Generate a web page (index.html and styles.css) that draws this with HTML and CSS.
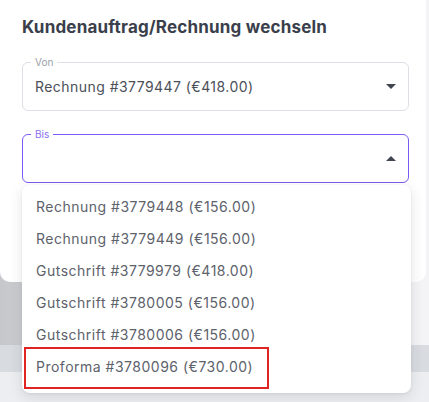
FILE: index.html
```html
<!DOCTYPE html>
<html lang="de">
<head>
<meta charset="utf-8">
<link rel="stylesheet" href="styles.css">
</head>
<body>
<div class="card">
  <h2 class="title">Kundenauftrag/Rechnung wechseln</h2>
  <div class="field">
    <span class="label">Von</span>
    <span class="value">Rechnung #3779447 (€418.00)</span>
    <span class="caret down"></span>
  </div>
  <div class="field focused">
    <span class="label">Bis</span>
    <span class="value"></span>
    <span class="caret up"></span>
  </div>
</div>
<ul class="menu">
  <li class="item">Rechnung #3779448 (€156.00)</li>
  <li class="item">Rechnung #3779449 (€156.00)</li>
  <li class="item">Gutschrift #3779979 (€418.00)</li>
  <li class="item">Gutschrift #3780005 (€156.00)</li>
  <li class="item">Gutschrift #3780006 (€156.00)</li>
  <li class="item marked">Proforma #3780096 (€730.00)</li>
</ul>
</body>
</html>
```
FILE: styles.css
```css
* { box-sizing: border-box; }
html, body { margin: 0; padding: 0; }
body {
  width: 429px;
  height: 402px;
  overflow: hidden;
  position: relative;
  font-family: "Inter", "Noto Sans", sans-serif;
  background:
    linear-gradient(to bottom, transparent 345px, #d8dbe0 345px, #d8dbe0 372px, #eceef1 372px),
    linear-gradient(to right, #c5c7cb 0%, #e4e5e8 30%, #f2f2f4 60%, #f4f4f6 100%);
}
.card {
  width: 426px;
  height: 282px;
  background: #fff;
  border-radius: 0 0 10px 10px;
  padding: 17px 17px 0 22px;
  display: flex;
  flex-direction: column;
}
.title {
  margin: 0 0 25px;
  font-size: 17px;
  font-weight: 700;
  color: #3a3f4b;
  line-height: 20px;
  letter-spacing: 0.2px;
}
.field {
  position: relative;
  height: 49px;
  border: 1px solid #dcdfe4;
  border-radius: 6px;
  display: flex;
  align-items: center;
  padding: 0 12px;
  margin-bottom: 23px;
}
.field.focused { border-color: #7b5cf0; }
.label {
  position: absolute;
  left: 8px;
  top: -7px;
  padding: 0 4px;
  background: #fff;
  font-size: 10px;
  line-height: 12px;
  color: #9ba0a7;
}
.focused .label { color: #8a6ff2; }
.value {
  flex: 1;
  font-size: 14px;
  letter-spacing: 0.45px;
  color: #4b5058;
}
.caret {
  width: 0;
  height: 0;
  border-left: 5px solid transparent;
  border-right: 5px solid transparent;
}
.caret.down { border-top: 5px solid #3f4652; }
.caret.up { border-bottom: 5px solid #3f4652; }
.menu {
  position: absolute;
  left: 22px;
  top: 185px;
  width: 389px;
  margin: 0;
  padding: 6px 0 10px;
  list-style: none;
  background: #fff;
  border-radius: 8px;
  box-shadow: 0 4px 14px rgba(40, 45, 60, 0.12), 0 1px 3px rgba(40, 45, 60, 0.08);
}
.item {
  position: relative;
  height: 32px;
  line-height: 32px;
  padding-left: 14px;
  font-size: 14px;
  letter-spacing: 0.5px;
  color: #5d626b;
}
.item.marked::after {
  content: "";
  position: absolute;
  left: 2px;
  top: -4px;
  width: 241px;
  height: 38px;
  border: 2px solid #e02424;
}
```
